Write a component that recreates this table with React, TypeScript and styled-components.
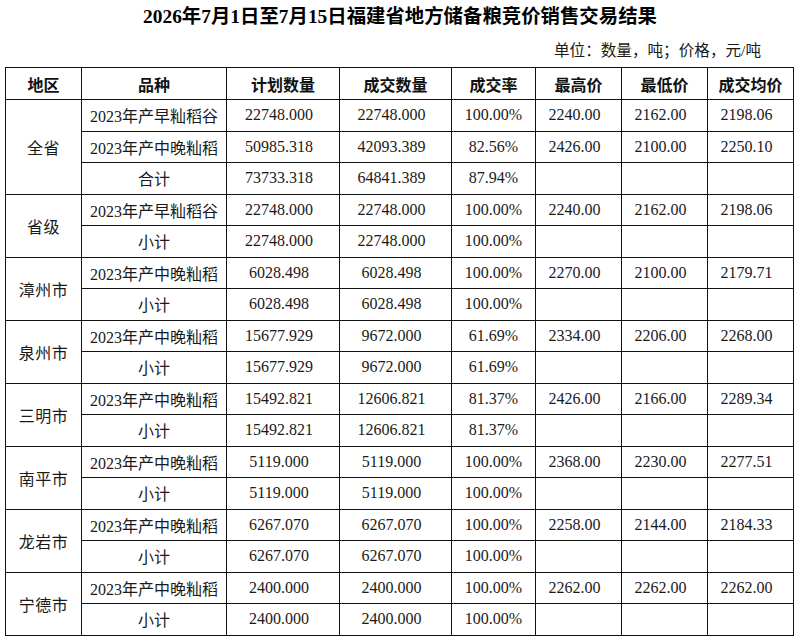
import styled, { createGlobalStyle } from "styled-components";

const GlobalStyle = createGlobalStyle`
    html, body {
        margin: 0;
        padding: 0;
        background: #fff;
    }
    body {
        font-family: "Liberation Serif", "Noto Sans CJK SC", serif;
        color: #1a1a1a;
    }
`;

const Page = styled.div`
    width: 800px;
    height: 639px;
    overflow: hidden;
    display: flex;
    flex-direction: column;
`;

const Title = styled.h1`
    margin: 6px 0 0;
    font-size: 19.4px;
    line-height: 22px;
    font-weight: 700;
    text-align: center;
    color: #000;
`;

const Unit = styled.div`
    margin-top: 13px;
    padding-right: 39px;
    font-size: 15.6px;
    line-height: 20px;
    text-align: right;
`;

const Table = styled.table`
    margin: 6px 0 0 5px;
    width: 788px;
    table-layout: fixed;
    border-collapse: collapse;
    font-size: 16px;
`;

const Col = styled.col<{ $w: number }>`
    width: ${props => props.$w}px;
`;

const Th = styled.th`
    height: 31px;
    padding: 0;
    border: 1px solid #111;
    font-weight: 700;
    text-align: center;
    color: #111;
`;

const Td = styled.td<{ $shift?: boolean }>`
    height: 30.5px;
    padding: 0 ${props => (props.$shift ? "8px" : "0")} 0 0;
    border: 1px solid #111;
    text-align: center;
    white-space: nowrap;
`;

const RegionCell = styled.td`
    padding: 0;
    border: 1px solid #111;
    text-align: center;
    font-size: 16px;
    letter-spacing: 0.5px;
`;

type Row = string[];

interface IRegion {
    name: string;
    rows: Row[];
}

const headers = ["地区", "品种", "计划数量", "成交数量", "成交率", "最高价", "最低价", "成交均价"];
const widths = [76, 145, 113, 112, 84, 86, 86, 86];

const EARLY = "2023年产早籼稻谷";
const LATE = "2023年产中晚籼稻";

const city = (name: string, plan: string, deal: string, rate: string, hi: string, lo: string, avg: string): IRegion => ({
    name,
    rows: [
        [LATE, plan, deal, rate, hi, lo, avg],
        ["小计", plan, deal, rate, "", "", ""],
    ],
});

const regions: IRegion[] = [
    {
        name: "全省",
        rows: [
            [EARLY, "22748.000", "22748.000", "100.00%", "2240.00", "2162.00", "2198.06"],
            [LATE, "50985.318", "42093.389", "82.56%", "2426.00", "2100.00", "2250.10"],
            ["合计", "73733.318", "64841.389", "87.94%", "", "", ""],
        ],
    },
    {
        name: "省级",
        rows: [
            [EARLY, "22748.000", "22748.000", "100.00%", "2240.00", "2162.00", "2198.06"],
            ["小计", "22748.000", "22748.000", "100.00%", "", "", ""],
        ],
    },
    city("漳州市", "6028.498", "6028.498", "100.00%", "2270.00", "2100.00", "2179.71"),
    city("泉州市", "15677.929", "9672.000", "61.69%", "2334.00", "2206.00", "2268.00"),
    city("三明市", "15492.821", "12606.821", "81.37%", "2426.00", "2166.00", "2289.34"),
    city("南平市", "5119.000", "5119.000", "100.00%", "2368.00", "2230.00", "2277.51"),
    city("龙岩市", "6267.070", "6267.070", "100.00%", "2258.00", "2144.00", "2184.33"),
    city("宁德市", "2400.000", "2400.000", "100.00%", "2262.00", "2262.00", "2262.00"),
];

// columns whose numbers sit a little left of centre in the source
const shifted = [false, true, true, false, true, true, true];

const App = () => {
    return (
        <Page>
            <GlobalStyle />
            <Title>2026年7月1日至7月15日福建省地方储备粮竞价销售交易结果</Title>
            <Unit>单位：数量，吨；价格，元/吨</Unit>
            <Table>
                <colgroup>
                    {widths.map((w, i) => (
                        <Col key={i} $w={w} />
                    ))}
                </colgroup>
                <thead>
                    <tr>
                        {headers.map(h => (
                            <Th key={h}>{h}</Th>
                        ))}
                    </tr>
                </thead>
                <tbody>
                    {regions.map(region =>
                        region.rows.map((row, ri) => (
                            <tr key={`${region.name}-${ri}`}>
                                {ri === 0 && <RegionCell rowSpan={region.rows.length}>{region.name}</RegionCell>}
                                {row.map((cell, ci) => (
                                    <Td key={ci} $shift={shifted[ci]}>
                                        {cell}
                                    </Td>
                                ))}
                            </tr>
                        ))
                    )}
                </tbody>
            </Table>
        </Page>
    );
};

export default App;
